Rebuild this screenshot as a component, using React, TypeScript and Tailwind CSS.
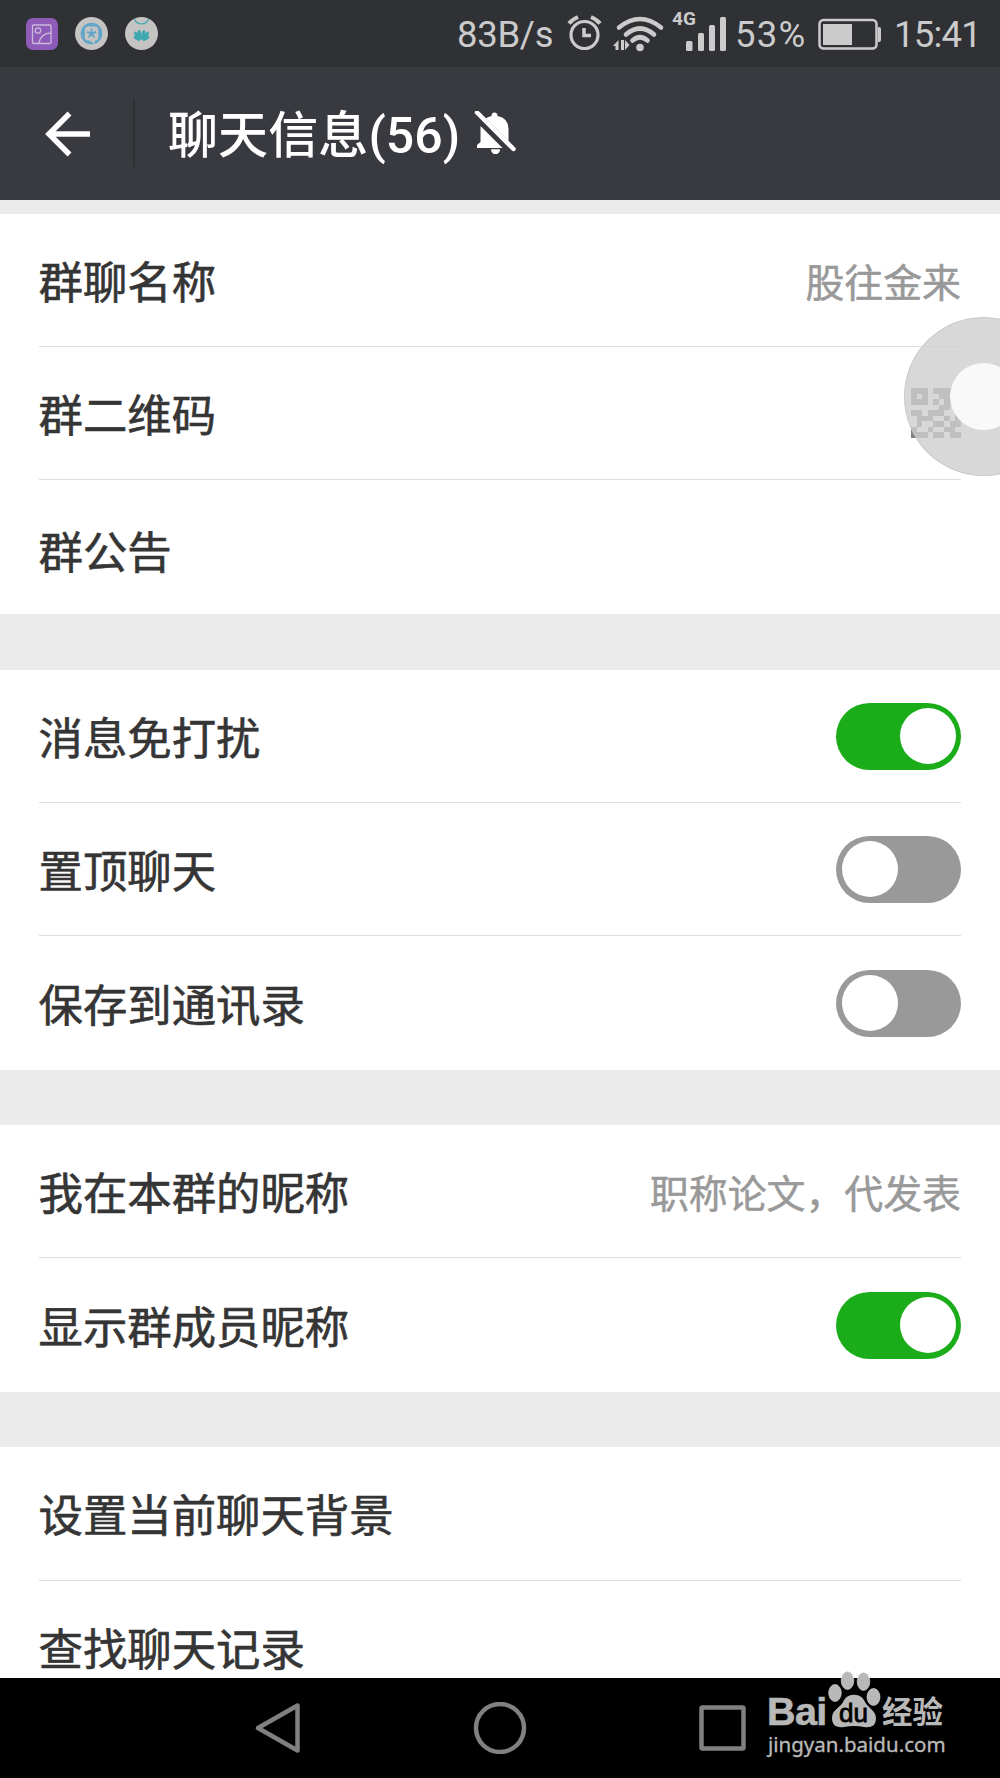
import React from "react";

const cjk = "font-[Roboto,'Noto_Sans_CJK_SC',sans-serif]";

function Toggle({ on }: { on?: boolean }) {
  return (
    <div
      className={
        "flex h-[67px] w-[125px] shrink-0 items-center rounded-full px-[5.5px] " +
        (on ? "justify-end bg-[#1aad19]" : "justify-start bg-[#999999]")
      }
    >
      <div className="h-14 w-14 rounded-full bg-white" />
    </div>
  );
}

function Row({
  label,
  last,
  height = "h-[133px]",
  shift = "pt-[7px]",
  children,
}: {
  label: string;
  last?: boolean;
  height?: string;
  shift?: string;
  children?: React.ReactNode;
}) {
  return (
    <div
      className={
        "mx-[39px] flex shrink-0 items-center justify-between " +
        height +
        (last ? "" : " border-b border-[#dedede]")
      }
    >
      <span
        className={
          "-ml-[0.5px] whitespace-nowrap text-[44.4px] leading-[60px] text-[#353535] [-webkit-text-stroke:0.6px_#353535] " +
          shift
        }
      >
        {label}
      </span>
      {children}
    </div>
  );
}

function Value({ children }: { children: React.ReactNode }) {
  return (
    <span className="whitespace-nowrap pt-[7px] text-[38.9px] leading-[56px] text-[#999999] [-webkit-text-stroke:0.5px_#999999]">
      {children}
    </span>
  );
}

const qrRows = [
  "111011111",
  "101001101",
  "111010111",
  "000001100",
  "110111001",
  "011100101",
  "010011011",
  "100100110",
  "111011011",
];

function QrIcon() {
  return (
    <svg className="h-[50px] w-[50px]" viewBox="0 0 9 9" fill="#808080" shapeRendering="crispEdges">
      {qrRows.flatMap((r, y) =>
        r.split("").map((c, x) => (c === "1" ? <rect key={x + "-" + y} x={x} y={y} width="1" height="1" /> : null)),
      )}
    </svg>
  );
}

function StatusBar() {
  return (
    <div className="relative flex h-[67px] shrink-0 items-center bg-[#303135] text-[#cbcbcb]">
      <svg className="ml-[26px] h-8 w-8" viewBox="0 0 32 32" fill="none">
        <rect width="32" height="32" rx="7" fill="#8e5bb9" />
        <g stroke="#cdb9dc" strokeWidth="1.3">
          <rect x="6.500" y="7" width="18.500" height="18.500" rx="1" />
          <circle cx="12" cy="12.500" r="2.700" />
          <path d="M12.500 25.500C14 19 18 15 25 15" />
        </g>
      </svg>
      <svg className="ml-[17px] h-[33px] w-[33px]" viewBox="0 0 33 33" fill="none">
        <circle cx="16.500" cy="16.500" r="16.500" fill="#c6c4c2" />
        <circle cx="16.500" cy="16.500" r="10.800" fill="#62a5ca" />
        <rect x="9.800" y="9.500" width="13.500" height="14" rx="3.500" fill="#c6c4c2" />
        <path d="M14 23L20 22.500L19.500 27Z" fill="#c6c4c2" />
        <path d="M16.500 11.500V16.500M16.500 16.500L11.800 15M16.500 16.500L21.200 15M16.500 16.500L13.600 20.400M16.500 16.500L19.400 20.400" stroke="#62a5ca" strokeWidth="1.900" />
      </svg>
      <svg className="ml-[17px] h-[33px] w-[33px]" viewBox="0 0 33 33" fill="none">
        <circle cx="16.500" cy="16.500" r="16.500" fill="#c6c4c2" />
        <path d="M9.500 2C12 8.500 21 8.500 23.500 2" stroke="#47aab0" strokeWidth="1.400" />
        <g fill="#3fa9b1">
          <ellipse cx="14.700" cy="18" rx="1.900" ry="5" transform="rotate(-10 14.700 18)" />
          <ellipse cx="18.300" cy="18" rx="1.900" ry="5" transform="rotate(10 18.300 18)" />
          <ellipse cx="12.200" cy="19" rx="1.900" ry="5" transform="rotate(-30 12.200 19)" />
          <ellipse cx="20.800" cy="19" rx="1.900" ry="5" transform="rotate(30 20.800 19)" />
          <ellipse cx="11.800" cy="21.500" rx="1.600" ry="3.600" transform="rotate(-58 11.800 21.500)" />
          <ellipse cx="21.200" cy="21.500" rx="1.600" ry="3.600" transform="rotate(58 21.200 21.500)" />
        </g>
      </svg>
      <span className="ml-[299px] w-[110px] whitespace-nowrap pt-[3px] text-[36.5px] leading-10 tracking-[-0.3px]">83B/s</span>
      <svg className="h-[67px] w-[162px]" viewBox="567 0 162 67" fill="none" stroke="#cbcbcb">
        <circle cx="584.500" cy="35" r="13.500" strokeWidth="3.200" />
        <path d="M584 28V35.500H591" strokeWidth="3.500" />
        <path d="M569 23.500Q572 19.500 578 17M600 23.500Q597 19.500 591 17" strokeWidth="4" />
        <g strokeWidth="4.600" strokeLinecap="round">
          <path d="M619 27.500Q640 10.500 661 27.500" />
          <path d="M626 34.500Q640 22.500 654 34.500" />
          <path d="M632.500 40.500Q640 34 647.500 40.500" />
        </g>
        <g fill="#cbcbcb" stroke="none">
          <circle cx="640" cy="47.500" r="3.800" />
          <path d="M613 46L618.500 40V50H615.500V46H613ZM621 40H624V50H621V40ZM625 40L629.500 45L625 50Z" />
          <rect x="686" y="41" width="6.500" height="10" rx="1.500" />
          <rect x="698" y="33" width="6" height="18" rx="1.500" />
          <rect x="709" y="25" width="6" height="26" rx="1.500" />
          <rect x="720" y="17" width="6" height="34" rx="1.500" />
        </g>
      </svg>
      <span className="absolute left-[672px] top-[9px] text-[19px] font-bold leading-5">4G</span>
      <span className="ml-[6px] w-[83px] whitespace-nowrap pt-[3px] text-[36.5px] leading-10 tracking-[1.2px]">53%</span>
      <svg className="h-8 w-[63px]" viewBox="0 0 63 32" fill="none">
        <rect x="1.500" y="2" width="57" height="28.500" rx="4" stroke="#cbcbcb" strokeWidth="2.500" />
        <rect x="5" y="6" width="29" height="21" fill="#cbcbcb" />
        <path d="M60 9H61Q63 9 63 11V22Q63 24 61 24H60Z" fill="#cbcbcb" />
      </svg>
      <span className="ml-[13px] whitespace-nowrap pt-[3px] text-[36.5px] leading-10 tracking-[-0.8px]">15:41</span>
    </div>
  );
}

function Header() {
  return (
    <div className="flex h-[133px] shrink-0 items-center bg-[#393a3f] text-white">
      <svg className="ml-[45px] h-[46px] w-[46px]" viewBox="0 0 46 46" fill="none" stroke="white" strokeWidth="5.500">
        <path d="M45 23H5M24.500 2.500L4 23L24.500 43.500" />
      </svg>
      <div className="ml-[42px] h-[67px] w-[2px] bg-[#2e2f33]" />
      <div className="ml-[33px] whitespace-nowrap pt-[5px] text-[50px] font-medium leading-[70px] tracking-[0.1px]">
        聊天信息(56)
      </div>
      <svg className="ml-[14px] h-[46px] w-[42px]" viewBox="474 110 42 46">
        <path d="M477 147V144L480.500 141V126Q482 117 491.500 115Q491.500 111.500 494.500 111.500Q497.500 111.500 497.500 115Q508.500 117 508.500 128V141L512 144V147Z" fill="white" />
        <path d="M491 148.500H500Q499 153 495.500 153Q492 153 491 148.500Z" fill="white" />
        <path d="M471 115.500L509 153.500L520 153.500L520 151.500L478 109.500Z" fill="#393a3f" />
        <path d="M491 148.500H500Q499 153 495.500 153Q492 153 491 148.500Z" fill="white" />
        <path d="M477 111.500L513.500 148" stroke="white" strokeWidth="4.500" strokeLinecap="round" />
      </svg>
    </div>
  );
}

function Watermark() {
  return (
    <div className="absolute left-[766px] top-[1668px] h-[90px] w-[182px] text-[#b8b8b8]">
      <svg className="absolute inset-0" width="182" height="90" viewBox="766 1668 182 90" fill="#b8b8b8">
        <g stroke="#e2e2e2" strokeWidth="0.600">
          <ellipse cx="835" cy="1693" rx="6.300" ry="8.500" />
          <ellipse cx="847.500" cy="1680.500" rx="6.300" ry="9" />
          <ellipse cx="863.500" cy="1681.500" rx="6.300" ry="9" />
          <ellipse cx="873.500" cy="1697" rx="6.500" ry="8.500" />
        </g>
        <path d="M832 1718C832 1709 841 1708 844 1700C848 1693 860 1693 864 1700C867 1708 876 1710 876 1718C876 1726 871 1728 864 1727Q854 1725 844 1727C836 1728 832 1725 832 1718Z" />
      </svg>
      <span className="absolute left-[1px] top-[25px] font-['Liberation_Sans'] text-[39.500px] font-bold leading-[36px] tracking-[-0.6px] [-webkit-text-stroke:0.6px_#b8b8b8]">
        Bai
      </span>
      <span className="absolute left-[73px] top-[30px] font-['Liberation_Sans'] text-[26px] leading-[30px] text-black [-webkit-text-stroke:0.8px_#000]">
        du
      </span>
      <span className="absolute left-[116px] top-[27px] whitespace-nowrap text-[30.500px] font-bold leading-9">经验</span>
      <span className="absolute left-[2px] top-[62px] whitespace-nowrap font-['Noto_Sans'] text-[20.500px] leading-7 [-webkit-text-stroke:0.3px_#c4c4c4]">
        jingyan.baidu.com
      </span>
    </div>
  );
}

export default function App() {
  return (
    <div className={"relative flex h-[1778px] w-[1000px] flex-col overflow-hidden bg-[#ebebeb] " + cjk}>
      <StatusBar />
      <Header />
      <main className="flex h-[1478px] flex-col overflow-hidden pt-[14px]">
        <section className="bg-white">
          <Row label="群聊名称">
            <Value>股往金来</Value>
          </Row>
          <Row label="群二维码" shift="pt-[8px]">
            <QrIcon />
          </Row>
          <Row label="群公告" height="h-[134px]" last shift="pt-[13px]" />
        </section>
        <section className="mt-[56px] bg-white">
          <Row label="消息免打扰">
            <Toggle on />
          </Row>
          <Row label="置顶聊天">
            <Toggle />
          </Row>
          <Row label="保存到通讯录" height="h-[134px]" last>
            <Toggle />
          </Row>
        </section>
        <section className="mt-[55px] bg-white">
          <Row label="我在本群的昵称">
            <Value>职称论文，代发表</Value>
          </Row>
          <Row label="显示群成员昵称" height="h-[134px]" last>
            <Toggle on />
          </Row>
        </section>
        <section className="mt-[55px] bg-white">
          <Row label="设置当前聊天背景" height="h-[134px]" />
          <Row label="查找聊天记录" last />
        </section>
      </main>
      <nav className="flex h-[100px] shrink-0 items-center bg-black">
        <svg className="ml-[255px] h-[52px] w-[492px]" viewBox="255 1702 492 52" fill="none" stroke="#808080" strokeWidth="4.500" strokeLinejoin="round">
          <path d="M297.500 1705.500V1750.500L258 1728Z" />
          <circle cx="500" cy="1728" r="24" />
          <rect x="701.500" y="1707.500" width="42" height="41" rx="1" />
        </svg>
      </nav>
      <div className="absolute left-[904px] top-[317px] h-[159px] w-[159px] rounded-full border border-[#c4c4c4]/80 bg-[#cecece]/80" />
      <div className="absolute left-[950px] top-[363px] h-[67px] w-[67px] rounded-full bg-[#fbfbfb]/95" />
      <Watermark />
    </div>
  );
}
